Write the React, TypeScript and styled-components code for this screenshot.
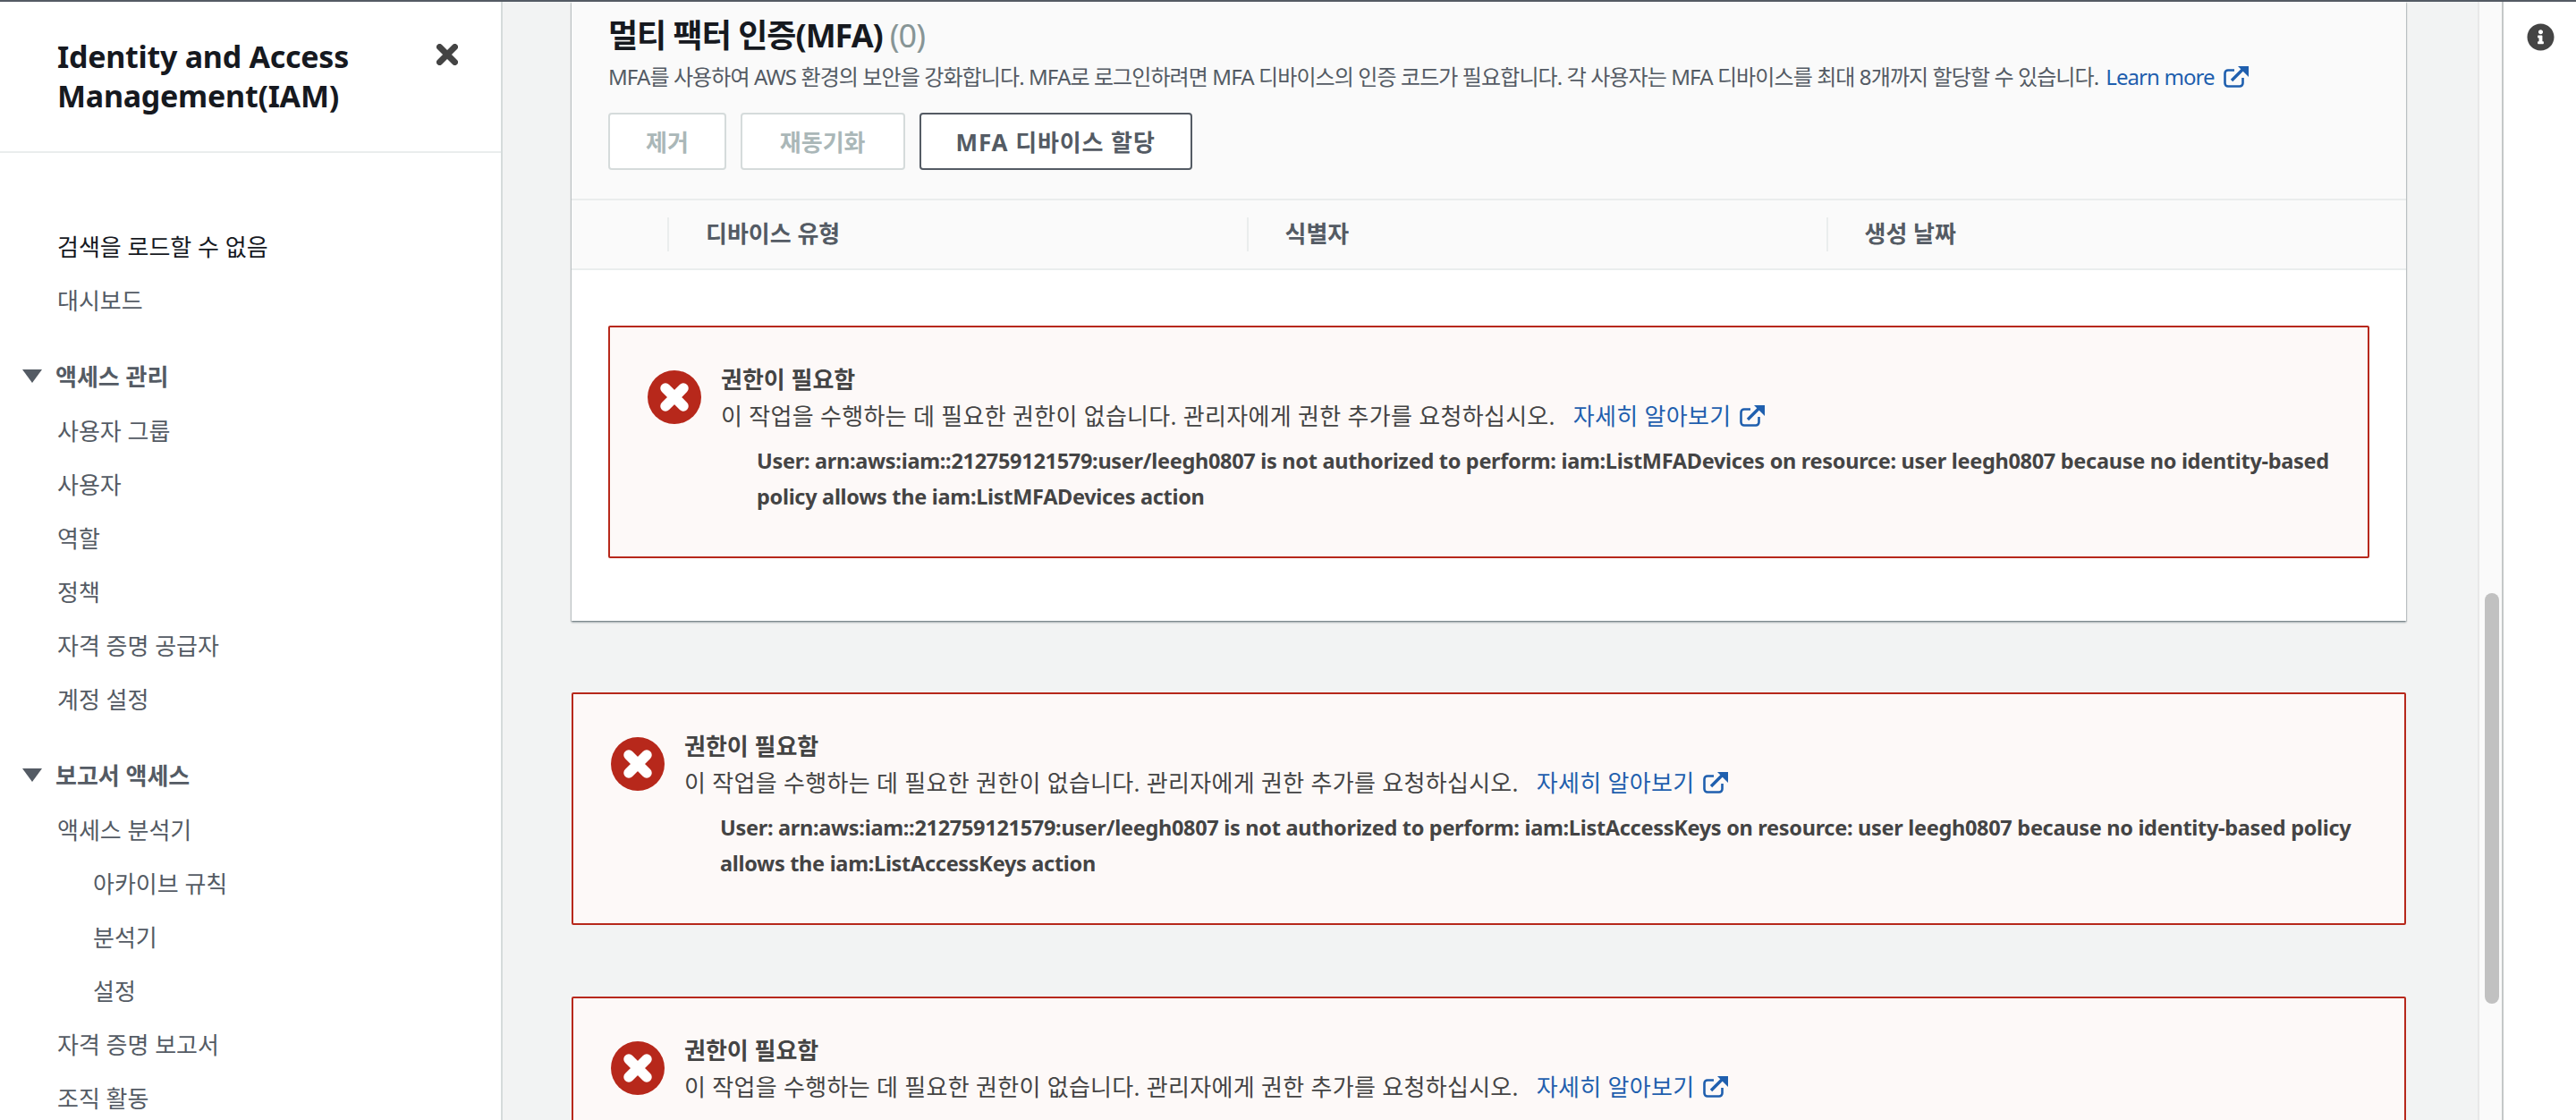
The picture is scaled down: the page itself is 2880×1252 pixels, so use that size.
import React from 'react';
import styled, { createGlobalStyle } from 'styled-components';
import { FaInfoCircle } from 'react-icons/fa';

const GlobalStyle = createGlobalStyle`
  html, body { margin: 0; padding: 0; height: 100%; overflow: hidden; }
  body { font-family: "Noto Sans", "Noto Sans CJK KR", sans-serif; color: #16191f; }
  * { box-sizing: border-box; }
`;

const Page = styled.div`
  width: 2880px;
  height: 1252px;
  display: flex;
  flex-direction: column;
  overflow: hidden;
  background: #fff;
`;
const TopStrip = styled.div`
  height: 2px;
  flex: none;
  background: #545b64;
`;
const Body = styled.div`
  flex: 1;
  min-height: 0;
  display: flex;
`;

const Sidebar = styled.nav`
  width: 562px;
  flex: none;
  background: #fff;
  border-right: 2px solid #d5dbdb;
  overflow: hidden;
`;
const SideHeader = styled.div`
  height: 169px;
  padding: 39px 48px 0 64px;
  display: flex;
  justify-content: space-between;
  align-items: flex-start;
  border-bottom: 2px solid #eaeded;
`;
const SideTitle = styled.h1`
  margin: 0;
  width: 380px;
  font-family: "Noto Sans", "Noto Sans CJK KR", sans-serif;
  font-weight: 700;
  font-size: 34px;
  line-height: 44px;
  letter-spacing: -0.26px;
  color: #16191f;
`;
const CloseButton = styled.span`
  display: flex;
  margin-top: 8px;
`;
const NavList = styled.ul`
  list-style: none;
  margin: 0;
  padding: 75px 0 0 0;
`;
const NavItem = styled.li<{ $depth?: number; $strong?: boolean }>`
  height: 60px;
  line-height: 60px;
  padding-left: ${({ $depth }) => ($depth ? 104 : 64)}px;
  font-size: 26px;
  color: ${({ $strong }) => ($strong ? '#16191f' : '#545b64')};
  white-space: nowrap;
`;
const NavSection = styled.li`
  height: 64px;
  margin-top: 22px;
  display: flex;
  align-items: center;
  padding-left: 25px;
  gap: 15px;
  font-size: 26px;
  font-weight: 700;
  color: #545b64;
  white-space: nowrap;
`;
const Caret = styled.span`
  width: 0;
  height: 0;
  border-left: 11px solid transparent;
  border-right: 11px solid transparent;
  border-top: 15px solid #545b64;
`;

const Main = styled.main`
  flex: 1;
  min-width: 0;
  background: #f2f3f3;
  padding: 0 80px 0 77px;
  overflow: hidden;
`;
const Card = styled.section`
  background: #fff;
  box-shadow: 0 2px 2px rgba(0, 28, 36, 0.3), 1px 1px 1px rgba(0, 28, 36, 0.15), -1px 1px 1px rgba(0, 28, 36, 0.15);
`;
const CardHead = styled.header`
  background: #fafafa;
  padding: 14px 40px 0 41px;
  height: 222px;
  border-bottom: 2px solid #eaeded;
`;
const CardTitle = styled.h2`
  margin: 0;
  font-size: 36px;
  line-height: 48px;
  font-weight: 700;
  letter-spacing: -1px;
  color: #16191f;
`;
const Count = styled.span`
  font-weight: 400;
  color: #879596;
  margin-left: 8px;
`;
const CardDesc = styled.p`
  margin: 9px 0 0 0;
  font-size: 24px;
  line-height: 26px;
  letter-spacing: -0.9px;
  color: #545b64;
  white-space: nowrap;
  display: flex;
  align-items: center;
`;
const DocLink = styled.a<{ $gap?: number }>`
  color: #1f5fae;
  display: inline-flex;
  align-items: center;
  gap: 10px;
  margin-left: ${({ $gap }) => $gap ?? 8}px;
  text-decoration: none;
  white-space: nowrap;
`;
const Toolbar = styled.div`
  display: flex;
  gap: 16px;
  margin-top: 27px;
`;
const Button = styled.button<{ $off?: boolean; $pad: number }>`
  height: 64px;
  padding: 0 ${({ $pad }) => $pad}px;
  background: #fff;
  border: 2px solid ${({ $off }) => ($off ? '#d5dbdb' : '#545b64')};
  border-radius: 4px;
  font-family: inherit;
  font-size: 26px;
  font-weight: 700;
  letter-spacing: ${({ $off }) => ($off ? 0 : 0.9)}px;
  color: ${({ $off }) => ($off ? '#aab7b8' : '#545b64')};
`;
const TableHead = styled.div`
  height: 78px;
  background: #fafafa;
  border-bottom: 2px solid #eaeded;
  display: grid;
  grid-template-columns: 107px 647.5px 648px 1fr;
  align-items: center;
`;
const HeadCell = styled.div`
  height: 38px;
  line-height: 36px;
  padding-left: 41px;
  font-size: 26px;
  font-weight: 700;
  color: #545b64;
  border-left: 2px solid #eaeded;
  white-space: nowrap;
`;
const CardBody = styled.div`
  padding: 62px 41px 70px 41px;
`;

const AlertBox = styled.div`
  height: 260px;
  background: #fdf9f8;
  border: 2px solid #b7281b;
  border-radius: 2px;
  padding: 40px 30px 0 42px;
  display: flex;
  gap: 22px;
`;
const AlertMark = styled.span`
  flex: none;
  display: flex;
  margin-top: 8px;
  height: 60px;
`;
const AlertText = styled.div`
  min-width: 0;
  flex: 1;
`;
const AlertTitle = styled.div`
  font-size: 26px;
  line-height: 36px;
  font-weight: 700;
  color: #444;
`;
const AlertDesc = styled.div`
  margin-top: 5px;
  font-size: 26px;
  line-height: 36px;
  letter-spacing: 0.3px;
  color: #444;
  display: flex;
  align-items: center;
  white-space: nowrap;
`;
const AlertDetail = styled.div`
  margin: 12px 0 0 40px;
  font-size: 23.500px;
  line-height: 40px;
  letter-spacing: -0.3px;
  font-weight: 700;
  color: #444;
  white-space: nowrap;
`;
const PageAlerts = styled.div`
  margin-top: 80px;
  display: flex;
  flex-direction: column;
  gap: 80px;
`;

const ScrollTrack = styled.div`
  width: 29px;
  flex: none;
  padding: 661px 3px 0 6px;
  background: #fafafa;
  border-left: 2px solid #e8e8e8;
  border-right: 2px solid #c4c8c8;
`;
const ScrollThumb = styled.div`
  width: 16px;
  height: 459px;
  border-radius: 8px;
  background: #c1c1c1;
`;
const InfoRail = styled.aside`
  flex: none;
  width: 81px;
  background: #fff;
  padding: 24px 0 0 26px;
  display: flex;
  align-items: flex-start;
  color: #444;
  font-size: 31px;
`;

const ExternalIcon = () => (
  <svg width="28" height="24" viewBox="0 0 28 24" fill="none" stroke="currentColor" strokeWidth="2.6">
    <path d="M12 4.500H5a3.500 3.500 0 0 0-3.500 3.500v11A3.500 3.500 0 0 0 5 22.500h13a3.500 3.500 0 0 0 3.500-3.500v-6" />
    <path d="M9 16L21 4" strokeWidth="3.400" />
    <path d="M16 0h12v12z" fill="currentColor" stroke="none" />
  </svg>
);

const CloseIcon = () => (
  <svg width="24" height="24" viewBox="0 0 24 24">
    <path d="M3.500 3.500L20.500 20.500M20.500 3.500L3.500 20.500" stroke="#444" strokeWidth="7" strokeLinecap="round" />
  </svg>
);

const ErrorIcon = () => (
  <svg width="60" height="60" viewBox="0 0 60 60">
    <circle cx="30" cy="30" r="30" fill="#b7281b" />
    <path d="M20 20L40 40M40 20L20 40" stroke="#fff" strokeWidth="11.500" strokeLinecap="round" />
  </svg>
);

const navTop = ['사용자 그룹', '사용자', '역할', '정책', '자격 증명 공급자', '계정 설정'];

const Alert = (props: { lines?: [string, string] }) => (
  <AlertBox>
    <AlertMark><ErrorIcon /></AlertMark>
    <AlertText>
      <AlertTitle>권한이 필요함</AlertTitle>
      <AlertDesc>
        이 작업을 수행하는 데 필요한 권한이 없습니다. 관리자에게 권한 추가를 요청하십시오.
        <DocLink $gap={20}>자세히 알아보기 <ExternalIcon /></DocLink>
      </AlertDesc>
      {props.lines ? <AlertDetail>{props.lines[0]}<br />{props.lines[1]}</AlertDetail> : null}
    </AlertText>
  </AlertBox>
);

export default function App() {
  return (
    <Page>
      <GlobalStyle />
      <TopStrip />
      <Body>
        <Sidebar>
          <SideHeader>
            <SideTitle>Identity and Access Management(IAM)</SideTitle>
            <CloseButton><CloseIcon /></CloseButton>
          </SideHeader>
          <NavList>
            <NavItem $strong>검색을 로드할 수 없음</NavItem>
            <NavItem>대시보드</NavItem>
            <NavSection><Caret />액세스 관리</NavSection>
            {navTop.map((it) => <NavItem key={it}>{it}</NavItem>)}
            <NavSection><Caret />보고서 액세스</NavSection>
            <NavItem>액세스 분석기</NavItem>
            <NavItem $depth={1}>아카이브 규칙</NavItem>
            <NavItem $depth={1}>분석기</NavItem>
            <NavItem $depth={1}>설정</NavItem>
            <NavItem>자격 증명 보고서</NavItem>
            <NavItem>조직 활동</NavItem>
          </NavList>
        </Sidebar>
        <Main>
          <Card>
            <CardHead>
              <CardTitle>멀티 팩터 인증(MFA)<Count>(0)</Count></CardTitle>
              <CardDesc>
                MFA를 사용하여 AWS 환경의 보안을 강화합니다. MFA로 로그인하려면 MFA 디바이스의 인증 코드가 필요합니다. 각 사용자는 MFA 디바이스를 최대 8개까지 할당할 수 있습니다.
                <DocLink>Learn more <ExternalIcon /></DocLink>
              </CardDesc>
              <Toolbar>
                <Button $off $pad={40}>제거</Button>
                <Button $off $pad={42}>재동기화</Button>
                <Button $pad={39}>MFA 디바이스 할당</Button>
              </Toolbar>
            </CardHead>
            <TableHead>
              <span />
              <HeadCell>디바이스 유형</HeadCell>
              <HeadCell>식별자</HeadCell>
              <HeadCell>생성 날짜</HeadCell>
            </TableHead>
            <CardBody>
              <Alert
                lines={[
                  'User: arn:aws:iam::212759121579:user/leegh0807 is not authorized to perform: iam:ListMFADevices on resource: user leegh0807 because no identity-based',
                  'policy allows the iam:ListMFADevices action',
                ]}
              />
            </CardBody>
          </Card>
          <PageAlerts>
            <Alert
              lines={[
                'User: arn:aws:iam::212759121579:user/leegh0807 is not authorized to perform: iam:ListAccessKeys on resource: user leegh0807 because no identity-based policy',
                'allows the iam:ListAccessKeys action',
              ]}
            />
            <Alert />
          </PageAlerts>
        </Main>
        <ScrollTrack><ScrollThumb /></ScrollTrack>
        <InfoRail><FaInfoCircle /></InfoRail>
      </Body>
    </Page>
  );
}
